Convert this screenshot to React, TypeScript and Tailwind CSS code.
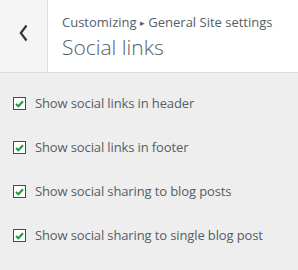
const options = [
  "Show social links in header",
  "Show social links in footer",
  "Show social sharing to blog posts",
  "Show social sharing to single blog post",
]

function Check() {
  return (
    <span className="flex h-[13px] w-[13px] shrink-0 items-center justify-center border border-[#32506b] bg-white">
      <svg width="9" height="8" viewBox="0 0 9 8">
        <path d="M1 3.9 L3.4 6.3 L8 1.3" fill="none" stroke="#1e9e32" strokeWidth="2.1" />
      </svg>
    </span>
  )
}

export default function App() {
  return (
    <div className="h-[270px] w-[298px] bg-[#eeeeee] font-['Open_Sans',sans-serif]">
      <div className="flex h-[73px] border-b border-[#dddddd]">
        <button className="flex w-[48px] justify-center border-r border-[#dddddd] bg-[#f5f5f5] pt-[24px]">
          <svg width="10" height="18" viewBox="0 0 10 18">
            <path d="M7.5 1.5 L1.8 9 L7.5 16.5" fill="none" stroke="#32373c" strokeWidth="2.2" />
          </svg>
        </button>
        <div className="flex flex-1 flex-col bg-white pl-[14px] pt-[12px]">
          <div className="text-[13px] leading-[20px] text-[#555d66]">
            Customizing <span className="text-[9px] align-[1px]">▸</span> General Site settings
          </div>
          <div className="text-[21px] font-light leading-[28px] text-[#555d66]">Social links</div>
        </div>
      </div>
      <div className="flex flex-col gap-[25px] pl-[13px] pt-[21px]">
        {options.map((o) => (
          <label key={o} className="flex h-[19px] items-center gap-[9px] text-[13px] tracking-[-0.12px] text-[#555d66]">
            <Check />
            <span>{o}</span>
          </label>
        ))}
      </div>
    </div>
  )
}
